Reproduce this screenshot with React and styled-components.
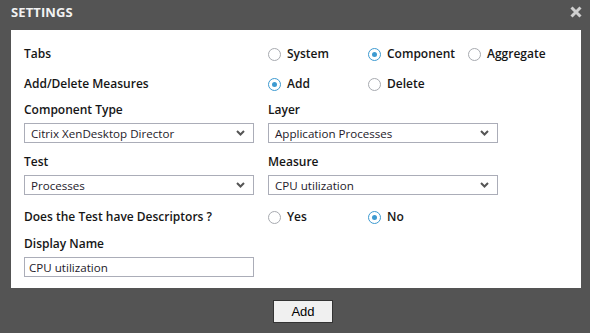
import React from "react";
import styled, { createGlobalStyle } from "styled-components";

const GlobalStyle = createGlobalStyle`
  html, body {
    margin: 0;
    padding: 0;
    background: #545454;
  }
  body {
    font-family: "Open Sans", "DejaVu Sans", sans-serif;
  }
`;

const Window = styled.div`
  width: 590px;
  height: 333px;
  background-color: #545454;
  display: flex;
  flex-direction: column;
`;

const Header = styled.div`
  height: 30px;
  display: flex;
  align-items: center;
  justify-content: space-between;
  padding: 0 8px 6px 11px;
  box-sizing: border-box;
`;

const Title = styled.h1`
  margin: 0;
  font-size: 13px;
  font-weight: 700;
  color: #f2f2f2;
  letter-spacing: 0.1px;
`;

const CloseIcon = styled.svg`
  width: 12px;
  height: 12px;
  display: block;
`;

const Panel = styled.div`
  margin: 0 9px 0 11px;
  height: 258px;
  background: #ffffff;
  padding: 15px 13px 12px 13px;
  box-sizing: border-box;
  display: flex;
  flex-direction: column;
`;

const Row = styled.div`
  display: grid;
  grid-template-columns: 230px 230px;
  column-gap: 14px;
  align-items: center;
  margin-top: ${(p) => p.$mt || 0}px;
`;

const Field = styled.div`
  display: flex;
  flex-direction: column;
  gap: 4px;
`;

const Label = styled.div`
  font-size: 12px;
  font-weight: 600;
  line-height: 18px;
  color: #161616;
`;

const RadioGroup = styled.div`
  display: flex;
  align-items: center;
`;

const RadioOption = styled.label`
  flex: 0 0 100px;
  display: flex;
  align-items: center;
  gap: 6px;
  font-size: 12px;
  font-weight: 600;
  line-height: 18px;
  color: #161616;
  white-space: nowrap;
`;

const RadioCircle = styled.span`
  width: 13px;
  height: 13px;
  box-sizing: border-box;
  border-radius: 50%;
  border: 1px solid ${(p) => (p.$checked ? "#3d9ad1" : "#a7aab0")};
  display: flex;
  align-items: center;
  justify-content: center;
  background: #fff;
  &::after {
    content: "";
    width: 5px;
    height: 5px;
    border-radius: 50%;
    background: #3d9ad1;
    display: ${(p) => (p.$checked ? "block" : "none")};
  }
`;

const Select = styled.div`
  height: 20px;
  box-sizing: border-box;
  border: 1px solid #abadb8;
  display: flex;
  align-items: center;
  justify-content: space-between;
  padding: 0 8px 0 6px;
  font-size: 11.6px;
  color: #241a2a;
  background: #fff;
`;

const Chevron = styled.svg`
  width: 9px;
  height: 6px;
  display: block;
`;

const TextInput = styled.div`
  height: 20px;
  box-sizing: border-box;
  border: 1px solid #abadb8;
  display: flex;
  align-items: center;
  padding: 0 4px;
  font-size: 11.6px;
  color: #241a2a;
`;

const Footer = styled.div`
  flex: 1;
  display: flex;
  align-items: center;
  justify-content: center;
  padding-left: 16px;
`;

const Button = styled.button`
  width: 60px;
  height: 23px;
  background: #f0f0f0;
  border: 1px solid #333;
  font-family: "Liberation Sans", Arial, sans-serif;
  font-size: 13px;
  color: #000;
  padding: 0;
  margin-top: 1px;
`;

function Radio({ label, checked }) {
  return (
    <RadioOption>
      <RadioCircle $checked={checked} />
      {label}
    </RadioOption>
  );
}

function Dropdown({ value }) {
  return (
    <Select>
      <span>{value}</span>
      <Chevron viewBox="0 0 9 6">
        <path d="M1 1 L4.5 4.5 L8 1" fill="none" stroke="#555" strokeWidth="2" />
      </Chevron>
    </Select>
  );
}

export default function App() {
  return (
    <Window>
      <GlobalStyle />
      <Header>
        <Title>SETTINGS</Title>
        <CloseIcon viewBox="0 0 12 12">
          <path d="M1.5 1.5 L10.5 10.5 M10.5 1.5 L1.5 10.5" stroke="#cfcfcf" strokeWidth="3" />
        </CloseIcon>
      </Header>
      <Panel>
        <Row>
          <Label>Tabs</Label>
          <RadioGroup>
            <Radio label="System" />
            <Radio label="Component" checked />
            <Radio label="Aggregate" />
          </RadioGroup>
        </Row>
        <Row $mt={12}>
          <Label>Add/Delete Measures</Label>
          <RadioGroup>
            <Radio label="Add" checked />
            <Radio label="Delete" />
          </RadioGroup>
        </Row>
        <Row $mt={8}>
          <Field>
            <Label>Component Type</Label>
            <Dropdown value="Citrix XenDesktop Director" />
          </Field>
          <Field>
            <Label>Layer</Label>
            <Dropdown value="Application Processes" />
          </Field>
        </Row>
        <Row $mt={10}>
          <Field>
            <Label>Test</Label>
            <Dropdown value="Processes" />
          </Field>
          <Field>
            <Label>Measure</Label>
            <Dropdown value="CPU utilization" />
          </Field>
        </Row>
        <Row $mt={13}>
          <Label>Does the Test have Descriptors ?</Label>
          <RadioGroup>
            <Radio label="Yes" />
            <Radio label="No" checked />
          </RadioGroup>
        </Row>
        <Row $mt={9}>
          <Field>
            <Label>Display Name</Label>
            <TextInput>CPU utilization</TextInput>
          </Field>
        </Row>
      </Panel>
      <Footer>
        <Button>Add</Button>
      </Footer>
    </Window>
  );
}
